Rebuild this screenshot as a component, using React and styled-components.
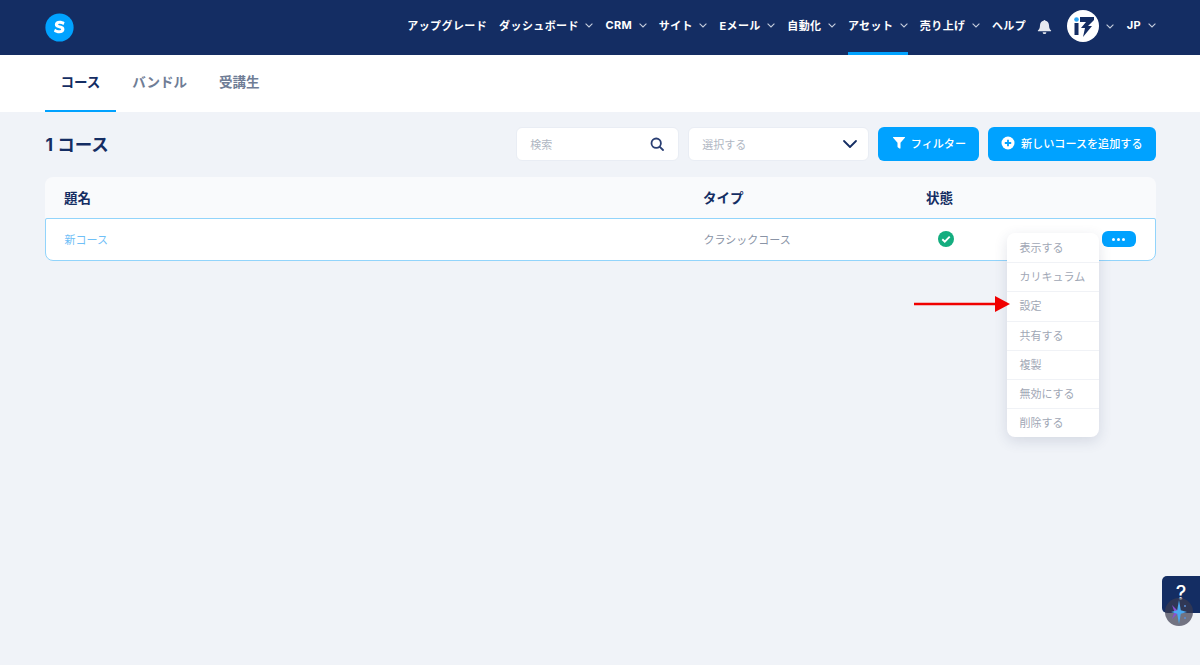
import React from 'react';
import styled, { createGlobalStyle } from 'styled-components';
import { ChevronDown } from 'lucide-react';

const GlobalStyle = createGlobalStyle`
  html, body {
    margin: 0;
    padding: 0;
    background: #f0f3f8;
    font-family: Inter, "Noto Sans CJK JP", sans-serif;
  }
  * { box-sizing: border-box; }
`;

const navItems = [
  { label: 'アップグレード' },
  { label: 'ダッシュボード', caret: true },
  { label: 'CRM', caret: true },
  { label: 'サイト', caret: true },
  { label: 'Eメール', caret: true },
  { label: '自動化', caret: true },
  { label: 'アセット', caret: true, active: true },
  { label: '売り上げ', caret: true },
  { label: 'ヘルプ' },
];

const menuItems = ['表示する', 'カリキュラム', '設定', '共有する', '複製', '無効にする', '削除する'];

const Chevron = () => (
  <Caret viewBox="0 0 8 5">
    <path d="M.6.7L4 4l3.400-3.300" fill="none" stroke="#c5cddd" strokeWidth="1.100" />
  </Caret>
);

const App = () => {
  return (
    <Page>
      <GlobalStyle />
      <TopBar>
        <Logo viewBox="0 0 30 30">
          <circle cx="15" cy="15" r="14.6" fill="#00a2ff" />
          <path d="M20.3 9.600c-1.500-1.100-3.300-1.600-5.200-1.600-2.900 0-4.900 1.500-4.900 3.900 0 4.600 6.500 3 6.500 5 0 .7-.7 1-1.800 1-1.600 0-3.200-.6-4.500-1.700l-1.200 2.900c1.500 1.200 3.500 1.900 5.600 1.900 3.100 0 5.300-1.500 5.300-4.100 0-4.600-6.500-3.100-6.500-4.900 0-.6.6-.9 1.500-.9 1.300 0 2.700.5 4 1.400z" fill="#fff" />
        </Logo>
        <NavList>
          {navItems.map((item) => (
            <NavItem key={item.label} $active={item.active}>
              {item.label}
              {item.caret && <Chevron />}
            </NavItem>
          ))}
          <Bell viewBox="0 0 16 16">
            <path d="M8 16a2 2 0 0 0 2-2H6a2 2 0 0 0 2 2zM8 1a1 1 0 0 1 1 .9c2.300.5 3.800 2.400 3.800 4.800 0 3.300 1.200 4.500 2.200 5.500.3.400 0 .9-.4.900H1.400c-.5 0-.7-.5-.4-.9 1-1 2.200-2.200 2.200-5.500C3.200 4.300 4.700 2.400 7 1.900A1 1 0 0 1 8 1z" fill="#e6e9f0" />
          </Bell>
          <AvatarWrap>
            <Avatar viewBox="0 0 32 32">
              <circle cx="16" cy="16" r="16" fill="#fff" />
              <circle cx="9.500" cy="9.500" r="2.300" fill="#2aa5f5" />
              <rect x="7.500" y="13" width="4" height="12" fill="#142d63" />
              <path d="M13 7h14v3l-6 6h4L16 27l2-9h-4l5-6h-6z" fill="#142d63" />
            </Avatar>
            <Chevron />
          </AvatarWrap>
          <NavItem>
            JP
            <Chevron />
          </NavItem>
        </NavList>
      </TopBar>

      <Tabs>
        <Tab $active>コース</Tab>
        <Tab>バンドル</Tab>
        <Tab>受講生</Tab>
      </Tabs>

      <Content>
        <Toolbar>
          <Title>1 コース</Title>
          <Controls>
            <SearchBox>
              <Placeholder>検索</Placeholder>
              <svg width="14" height="14" viewBox="0 0 14 14" fill="none" stroke="#2a3f73" strokeWidth="1.800">
                <circle cx="6.200" cy="6.200" r="4.700" />
                <path d="M9.800 9.800l3.200 3.200" strokeLinecap="round" />
              </svg>
            </SearchBox>
            <SelectBox>
              <Placeholder>選択する</Placeholder>
              <ChevronDown size={24} color="#142d63" strokeWidth={1.800} />
            </SelectBox>
            <FilterButton>
              <svg width="12" height="12" viewBox="0 0 12 12">
                <path d="M.4 0h11.200c.4 0 .5.400.3.700L7.500 5.800V11c0 .6-.5.800-1 .5l-1.500-1.100c-.3-.2-.5-.5-.5-.9V5.800L.1.700C-.1.400 0 0 .4 0z" fill="#fff" />
              </svg>
              フィルター
            </FilterButton>
            <BlueButton>
              <svg width="14" height="14" viewBox="0 0 14 14">
                <circle cx="7" cy="7" r="6.500" fill="#fff" />
                <path d="M7 3.800v6.400M3.800 7h6.400" stroke="#00a2ff" strokeWidth="1.800" />
              </svg>
              新しいコースを追加する
            </BlueButton>
          </Controls>
        </Toolbar>

        <Table>
          <HeadRow>
            <NameCell>題名</NameCell>
            <TypeCell>タイプ</TypeCell>
            <StateCell>状態</StateCell>
          </HeadRow>
          <BodyRow>
            <CourseName>新コース</CourseName>
            <CourseType>クラシックコース</CourseType>
            <StatusCell>
              <svg width="16" height="16" viewBox="0 0 16 16">
                <circle cx="8" cy="8" r="8" fill="#14ad7f" />
                <path d="M4.300 8.300l2.500 2.400 4.900-5" fill="none" stroke="#fff" strokeWidth="1.900" />
              </svg>
            </StatusCell>
            <DotsButton>
              <Dot /><Dot /><Dot />
            </DotsButton>
            <Menu>
              {menuItems.map((item) => (
                <MenuItem key={item}>{item}</MenuItem>
              ))}
            </Menu>
          </BodyRow>
        </Table>
      </Content>

      <Arrow width="98" height="20" viewBox="0 0 98 20">
        <path d="M0 10h82" stroke="#f00000" strokeWidth="2.500" />
        <path d="M81 2l15 8-15 8z" fill="#f00000" />
      </Arrow>

      <HelpTab>?</HelpTab>
      <Spark viewBox="0 0 28 28">
        <circle cx="14" cy="14" r="14" fill="#3c3c50" fillOpacity="0.7" />
        <path d="M14 14L7 7l2.500 7L7 21z" fill="#8a4fd0" />
        <path d="M14 2l1.800 10.200L22 14l-6.200 1.800L14 26l-1.800-10.200L6 14l6.200-1.800z" fill="#4aa8f0" />
        <circle cx="20" cy="8" r="1" fill="#5b8fd8" />
        <circle cx="20" cy="20" r="1" fill="#5b8fd8" />
      </Spark>
    </Page>
  );
};

const Page = styled.div`
  position: relative;
  width: 1200px;
  height: 665px;
  overflow: hidden;
  background: #f0f3f8;
`;

const TopBar = styled.header`
  display: flex;
  align-items: center;
  justify-content: space-between;
  height: 55px;
  padding: 0 44.5px;
  background: #142d63;
`;

const Logo = styled.svg`
  width: 29px;
  height: 29px;
`;

const NavList = styled.nav`
  display: flex;
  align-items: stretch;
  height: 55px;
  gap: 12px;
`;

const NavItem = styled.div`
  display: flex;
  align-items: center;
  padding-top: 1px;
  padding-bottom: 3px;
  color: #fff;
  font-size: 11px;
  letter-spacing: 0.4px;
  font-weight: 700;
  white-space: nowrap;
  border-bottom: 3px solid ${(props) => (props.$active ? '#00a2ff' : 'transparent')};
`;

const Caret = styled.svg`
  width: 8px;
  height: 5px;
  margin-left: 6.500px;
  flex-shrink: 0;
`;

const Bell = styled.svg`
  width: 15px;
  height: 15px;
  align-self: center;
  margin-top: -3px;
  margin-left: -1px;
`;

const AvatarWrap = styled.div`
  display: flex;
  align-items: center;
  margin-left: 3px;
  margin-right: 1px;
  margin-top: -3px;
`;

const Avatar = styled.svg`
  width: 32px;
  height: 32px;
`;

const Tabs = styled.div`
  display: flex;
  height: 57px;
  padding: 0 44.5px;
  background: #fff;
`;

const Tab = styled.div`
  display: flex;
  align-items: center;
  justify-content: center;
  padding: 0 16px 4px;
  font-size: 13.5px;
  font-weight: 700;
  color: ${(props) => (props.$active ? '#142d63' : '#6f7d96')};
  border-bottom: 2px solid ${(props) => (props.$active ? '#00a2ff' : 'transparent')};
`;

const Content = styled.main`
  padding: 15px 44.5px 0;
`;

const Toolbar = styled.div`
  display: flex;
  align-items: center;
  justify-content: space-between;
  height: 34px;
`;

const Title = styled.h1`
  margin: 0;
  padding: 0 0 2px 1px;
  font-size: 17.500px;
  font-weight: 700;
  color: #142d63;
`;

const Controls = styled.div`
  display: flex;
  gap: 9px;
`;

const Field = styled.div`
  display: flex;
  align-items: center;
  justify-content: space-between;
  height: 34px;
  background: #fff;
  border: 1px solid #e9edf4;
  border-radius: 6px;
`;

const SearchBox = styled(Field)`
  width: 163px;
  padding: 0 14px 0 13px;
`;

const SelectBox = styled(Field)`
  width: 181px;
  padding: 0 6px 0 13px;
`;

const Placeholder = styled.span`
  padding-bottom: 1px;
  font-size: 11px;
  color: #b0b7c3;
`;

const BlueButton = styled.button`
  display: flex;
  align-items: center;
  gap: 6px;
  height: 34px;
  padding: 0 13px 2px;
  border: none;
  border-radius: 6px;
  background: #00a2ff;
  color: #fff;
  font-family: inherit;
  font-size: 11.100px;
  font-weight: 500;
`;

const FilterButton = styled(BlueButton)`
  padding-left: 14.500px;
`;

const Table = styled.div`
  margin-top: 16px;
`;

const HeadRow = styled.div`
  display: flex;
  align-items: center;
  height: 41px;
  padding-left: 19.500px;
  padding-bottom: 2px;
  background: #f9fafc;
  border-radius: 8px 8px 0 0;
`;

const NameCell = styled.div`
  width: 639px;
  font-size: 13.500px;
  font-weight: 700;
  color: #142d63;
`;

const TypeCell = styled(NameCell)`
  width: 223px;
`;

const StateCell = styled(NameCell)`
  width: auto;
`;

const BodyRow = styled.div`
  position: relative;
  display: flex;
  align-items: center;
  height: 43px;
  padding: 0 19px 1px;
  background: #fff;
  border: 1px solid #92d4fb;
  border-radius: 2px 2px 8px 8px;
`;

const CourseName = styled.div`
  width: 639px;
  font-size: 11px;
  color: #6fc0f7;
`;

const CourseType = styled.div`
  width: 234px;
  font-size: 11px;
  color: #8a94a6;
`;

const StatusCell = styled.div`
  display: flex;
  width: 16px;
`;

const DotsButton = styled.button`
  display: flex;
  align-items: center;
  justify-content: center;
  gap: 2px;
  width: 34px;
  height: 16px;
  margin-left: auto;
  border: none;
  padding: 0;
  border-radius: 6px;
  background: #00a2ff;
`;

const Dot = styled.span`
  width: 3px;
  height: 3px;
  border-radius: 50%;
  background: #fff;
`;

const Menu = styled.ul`
  position: absolute;
  top: 14px;
  right: 56px;
  width: 92px;
  margin: 0;
  padding: 0;
  list-style: none;
  background: #fff;
  border-radius: 8px;
  box-shadow: 0 4px 14px rgba(40, 60, 100, 0.14);
`;

const MenuItem = styled.li`
  display: flex;
  align-items: center;
  height: 29.200px;
  padding: 0 0 2px 13px;
  font-size: 11px;
  color: #9fa7b5;
  border-top: 1px solid #f0f2f6;
  &:first-child {
    border-top: none;
  }
`;

const Arrow = styled.svg`
  position: absolute;
  left: 914px;
  top: 294px;
`;

const HelpTab = styled.div`
  position: absolute;
  left: 1162px;
  top: 576px;
  width: 38px;
  height: 37px;
  padding-top: 4px;
  text-align: center;
  background: #142d63;
  border-radius: 5px 0 0 5px;
  color: #fff;
  font-size: 20px;
  font-weight: 500;
  line-height: 26px;
`;

const Spark = styled.svg`
  position: absolute;
  left: 1165px;
  top: 598px;
  width: 28px;
  height: 28px;
`;

export default App;
